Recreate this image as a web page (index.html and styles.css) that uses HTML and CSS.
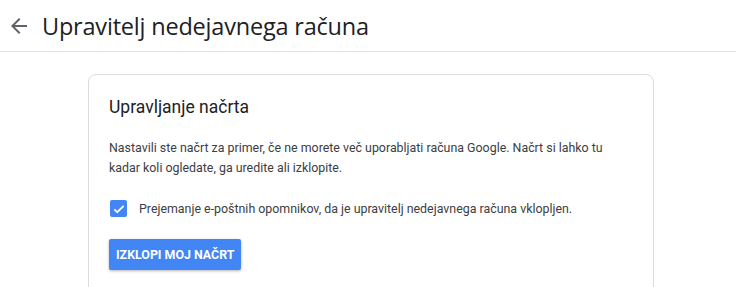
FILE: index.html
```html
<!DOCTYPE html>
<html lang="sl">
<head>
    <meta charset="UTF-8">
    <meta name="viewport" content="width=device-width, initial-scale=1.0">
    <title>Upravitelj nedejavnega računa</title>
    <link rel="stylesheet" href="styles.css">
</head>
<body>

<div class="header">
    <a class="back" href="#" aria-label="Nazaj">
        <svg width="24" height="24" viewBox="0 0 24 24">
            <path d="M20 11H7.83l5.59-5.59L12 4l-8 8 8 8 1.41-1.41L7.83 13H20v-2z" fill="#5f6368"/>
        </svg>
    </a>
    <h1>Upravitelj nedejavnega računa</h1>
</div>

<div class="main">
    <div class="card">
        <h2>Upravljanje načrta</h2>
        <p>Nastavili ste načrt za primer, če ne morete več uporabljati računa Google. Načrt si lahko tu kadar koli ogledate, ga uredite ali izklopite.</p>

        <label class="check-row">
            <span class="checkbox">
                <svg width="14" height="14" viewBox="0 0 24 24">
                    <path d="M4 12.5l5 5L20 6.5" fill="none" stroke="#fff" stroke-width="3"/>
                </svg>
            </span>
            Prejemanje e-poštnih opomnikov, da je upravitelj nedejavnega računa vklopljen.
        </label>

        <button class="off-btn">IZKLOPI MOJ NAČRT</button>
    </div>
</div>

</body>
</html>
```
FILE: styles.css
```css
body {
    margin: 0;
    font-family: Roboto, Arial, sans-serif;
    background-color: #fff;
    color: #202124;
}
.header {
    display: flex;
    align-items: center;
    height: 51px;
    border-bottom: 1px solid #e0e0e0;
    padding-left: 7px;
}
.back {
    display: flex;
    width: 24px;
    height: 24px;
    margin-right: 11px;
}
.header h1 {
    margin: 0;
    font-family: "Open Sans", sans-serif;
    font-weight: 400;
    font-size: 23.5px;
    color: #202124;
    letter-spacing: -0.2px;
}
.main {
    padding: 22px 0 0 88px;
}
.card {
    width: 524px;
    border: 1px solid #dadce0;
    border-radius: 8px;
    padding: 20px 20px 40px 20px;
}
.card h2 {
    margin: 0 0 19px;
    font-weight: 400;
    font-size: 17.5px;
    line-height: 24px;
    color: #202124;
}
.card p {
    max-width: 510px;
    margin: 0 0 22px;
    font-size: 12.4px;
    line-height: 20px;
    color: #3c4043;
}
.check-row {
    display: flex;
    align-items: center;
    font-size: 12.4px;
    color: #3c4043;
}
.checkbox {
    display: flex;
    align-items: center;
    justify-content: center;
    width: 17px;
    height: 17px;
    border-radius: 2px;
    background-color: #4285f4;
    margin: 0 12px 0 1px;
}
.off-btn {
    margin-top: 22px;
    height: 31px;
    padding: 0 7px;
    background-color: #4285f4;
    border: none;
    border-radius: 2px;
    color: #fff;
    font-family: Roboto, Arial, sans-serif;
    font-weight: 700;
    font-size: 12.4px;
    box-shadow: 0 1px 3px rgba(0, 0, 0, 0.3);
    cursor: pointer;
}
```
